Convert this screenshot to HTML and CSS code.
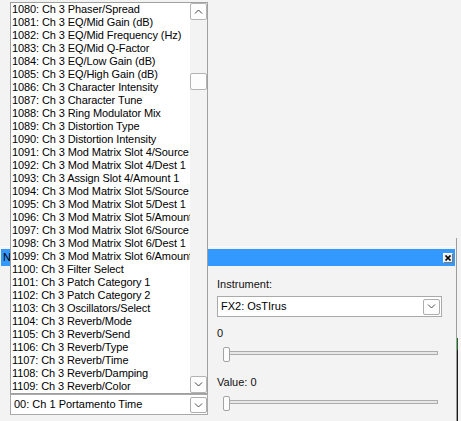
FILE: index.html
```html
<!DOCTYPE html>
<html>
<head>
<meta charset="utf-8">
<link rel="stylesheet" href="styles.css">
</head>
<body>
<div class="screen">
  <div class="backdrop"><span class="edge-green"></span><span class="edge-dark"></span></div>

  <section class="dialog">
    <header class="titlebar">
      <span class="title">New Parameter Link</span>
      <span class="close"><svg width="10" height="10" viewBox="0 0 10 10"><path d="M2.5 2.5 L7.5 7.5 M7.5 2.5 L2.5 7.5" stroke="#000" stroke-width="1.7" fill="none"/></svg></span>
    </header>
    <div class="dialog-body">
      <div class="col-left">
        <div class="combo param-combo">
          <span class="combo-text">00: Ch 1 Portamento Time</span>
          <span class="combo-btn"><svg width="9" height="5" viewBox="0 0 9 5"><path d="M1 0.5 L4.5 4 L8 0.5" stroke="#505050" stroke-width="1" fill="none"/></svg></span>
        </div>
      </div>
      <div class="col-right">
        <div class="field-label">Instrument:</div>
        <div class="combo instr-combo">
          <span class="combo-text">FX2: OsTIrus</span>
          <span class="combo-btn"><svg width="9" height="5" viewBox="0 0 9 5"><path d="M1 0.5 L4.5 4 L8 0.5" stroke="#505050" stroke-width="1" fill="none"/></svg></span>
        </div>
        <div class="field-label gap-a">0</div>
        <div class="slider gap-b"><div class="track"></div><div class="thumb"></div></div>
        <div class="field-label gap-c">Value: 0</div>
        <div class="slider gap-b"><div class="track"></div><div class="thumb"></div></div>
      </div>
    </div>
  </section>

  <div class="dropdown">
    <ul class="list">
      <li>1080: Ch 3 Phaser/Spread</li>
      <li>1081: Ch 3 EQ/Mid Gain (dB)</li>
      <li>1082: Ch 3 EQ/Mid Frequency (Hz)</li>
      <li>1083: Ch 3 EQ/Mid Q-Factor</li>
      <li>1084: Ch 3 EQ/Low Gain (dB)</li>
      <li>1085: Ch 3 EQ/High Gain (dB)</li>
      <li>1086: Ch 3 Character Intensity</li>
      <li>1087: Ch 3 Character Tune</li>
      <li>1088: Ch 3 Ring Modulator Mix</li>
      <li>1089: Ch 3 Distortion Type</li>
      <li>1090: Ch 3 Distortion Intensity</li>
      <li>1091: Ch 3 Mod Matrix Slot 4/Source</li>
      <li>1092: Ch 3 Mod Matrix Slot 4/Dest 1</li>
      <li>1093: Ch 3 Assign Slot 4/Amount 1</li>
      <li>1094: Ch 3 Mod Matrix Slot 5/Source</li>
      <li>1095: Ch 3 Mod Matrix Slot 5/Dest 1</li>
      <li>1096: Ch 3 Mod Matrix Slot 5/Amount 1</li>
      <li>1097: Ch 3 Mod Matrix Slot 6/Source</li>
      <li>1098: Ch 3 Mod Matrix Slot 6/Dest 1</li>
      <li>1099: Ch 3 Mod Matrix Slot 6/Amount 1</li>
      <li>1100: Ch 3 Filter Select</li>
      <li>1101: Ch 3 Patch Category 1</li>
      <li>1102: Ch 3 Patch Category 2</li>
      <li>1103: Ch 3 Oscillators/Select</li>
      <li>1104: Ch 3 Reverb/Mode</li>
      <li>1105: Ch 3 Reverb/Send</li>
      <li>1106: Ch 3 Reverb/Type</li>
      <li>1107: Ch 3 Reverb/Time</li>
      <li>1108: Ch 3 Reverb/Damping</li>
      <li>1109: Ch 3 Reverb/Color</li>
    </ul>
    <div class="scrollbar">
      <span class="sb-btn"><svg width="9" height="5" viewBox="0 0 9 5"><path d="M1 4.5 L4.5 1 L8 4.5" stroke="#404040" stroke-width="1" fill="none"/></svg></span>
      <span class="sb-thumb"></span>
      <span class="sb-btn sb-down"><svg width="9" height="5" viewBox="0 0 9 5"><path d="M1 0.5 L4.5 4 L8 0.5" stroke="#404040" stroke-width="1" fill="none"/></svg></span>
    </div>
  </div>
</div>
</body>
</html>
```

FILE: styles.css
```css
* { box-sizing: border-box; }

html, body {
  margin: 0;
  padding: 0;
}

body {
  background: #f3f3f3;
  font-family: "Liberation Sans", Arial, sans-serif;
  font-size: 11px;
  color: #000;
}

.screen {
  position: relative;
  width: 461px;
  height: 421px;
  overflow: hidden;
}

/* window edge behind the dialog */
.backdrop {
  position: absolute;
  left: 456px;
  top: 238px;
  width: 5px;
  height: 183px;
  border-left: 1px solid #9c9c9c;
  display: flex;
  flex-direction: column;
}
.edge-green {
  display: block;
  width: 1px;
  height: 12px;
  margin-top: 100px;
  background: #1f6b1f;
}
.edge-dark {
  display: block;
  width: 1px;
  flex: 1;
  background: #1a1a1a;
}

/* dialog */
.dialog {
  position: absolute;
  left: 0;
  top: 246px;
  width: 456px;
  height: 175px;
  border-top: 1px solid #fbfbfb;
  padding: 2px 1px 0 0;
  background: #f3f3f3;
}

.titlebar {
  height: 17px;
  margin-left: 1px;
  background: #3399ff;
  display: flex;
  align-items: center;
  justify-content: space-between;
  padding: 0 2px 0 2px;
}
.title {
  font-size: 11px;
  line-height: 13px;
  color: #000;
  white-space: nowrap;
}
.close {
  width: 10px;
  height: 10px;
  background: #ececec;
  border-top: 1px solid #ffffff;
  border-left: 1px solid #ffffff;
  border-right: 1px solid #7a7a7a;
  border-bottom: 1px solid #7a7a7a;
  display: flex;
  align-items: center;
  justify-content: center;
  overflow: hidden;
}
.close svg { flex: none; }

.dialog-body {
  display: grid;
  grid-template-columns: 198px 225px;
  column-gap: 9px;
  padding-left: 10px;
}

.col-left {
  padding-top: 128px;
}

.col-right {
  padding-top: 12px;
  display: flex;
  flex-direction: column;
}

.field-label {
  line-height: 13px;
  height: 13px;
  color: #111;
}
.gap-a { margin-top: 10px; }
.gap-b { margin-top: 7px; }
.gap-c { margin-top: 14px; }

/* combo boxes */
.combo {
  height: 21px;
  background: #fff;
  border: 1px solid #a9a9a9;
  display: flex;
  align-items: center;
  justify-content: space-between;
}
.instr-combo { margin-top: 5px; }
.combo-text {
  padding-left: 3px;
  line-height: 13px;
  white-space: nowrap;
}
.combo-btn {
  width: 17px;
  height: 16px;
  background: #fdfdfd;
  border: 1px solid #adadad;
  border-radius: 2px;
  display: flex;
  align-items: center;
  justify-content: center;
}
.param-combo .combo-btn { margin-right: 0; margin-top: 1px; }
.instr-combo .combo-btn { margin-right: 1px; }

/* sliders */
.slider {
  position: relative;
  height: 15px;
}
.track {
  margin: 4px 4px 0 8px;
  height: 4px;
  border: 1px solid #acacac;
  background: #e7e7e7;
}
.thumb {
  position: absolute;
  left: 6px;
  top: 0;
  width: 7px;
  height: 15px;
  background: #fdfdfd;
  border: 1px solid #a3a3a3;
  border-radius: 2px;
}

/* open dropdown list */
.dropdown {
  position: absolute;
  left: 10px;
  top: 2px;
  width: 198px;
  height: 392px;
  border: 1px solid #a0a0a0;
  background: #fff;
  display: flex;
}

.list {
  list-style: none;
  margin: 0;
  padding: 0;
  width: 179px;
  overflow: hidden;
}
.list li {
  height: 13px;
  line-height: 13px;
  padding-left: 1px;
  white-space: nowrap;
  overflow: hidden;
  letter-spacing: -0.1px;
  color: #000;
}

.scrollbar {
  width: 17px;
  background: #f3f3f3;
  display: flex;
  flex-direction: column;
}
.sb-btn {
  width: 17px;
  height: 17px;
  background: #fdfdfd;
  border: 1px solid #b4b4b4;
  border-radius: 2px;
  display: flex;
  align-items: center;
  justify-content: center;
}
.sb-thumb {
  width: 17px;
  height: 17px;
  margin-top: 53px;
  background: #fdfdfd;
  border: 1px solid #b4b4b4;
  border-radius: 2px;
}
.sb-down {
  margin-top: auto;
}
```
